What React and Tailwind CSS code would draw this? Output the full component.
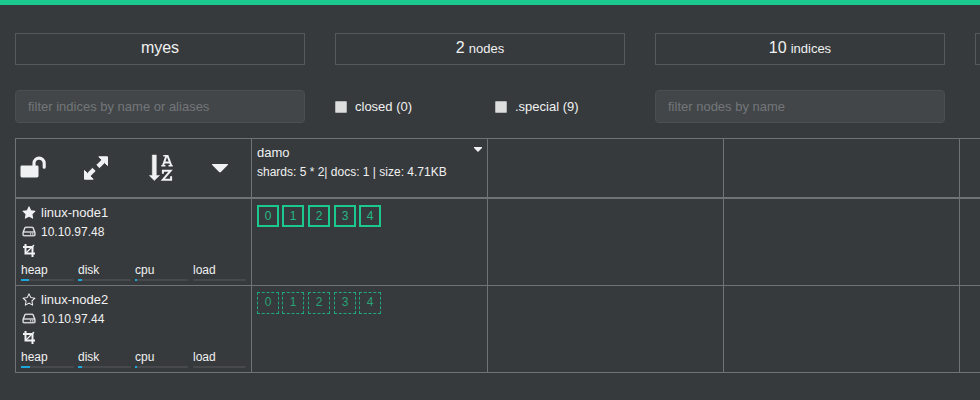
const STAR =
  'M1728 647q0 22-26 48l-363 354 86 500q1 7 1 20 0 21-10.5 35.5t-30.5 14.5q-19 0-40-12l-449-236-449 236q-22 12-40 12-21 0-31.5-14.5t-10.5-35.5q0-6 2-20l86-500-364-354q-25-27-25-48 0-37 56-46l502-73 225-455q19-41 49-41t49 41l225 455 502 73q56 9 56 46z';
const STAR_HOLE = 'M1201 1004l306-297-422-62-189-382-189 382-422 62 306 297-73 421 378-199 377 199z';
const HDD =
  'M1168 1216q0 33-23.5 56.5t-56.5 23.5-56.5-23.5-23.5-56.5 23.5-56.5 56.5-23.5 56.5 23.5 23.5 56.5zm256 0q0 33-23.5 56.5t-56.5 23.5-56.5-23.5-23.5-56.5 23.5-56.5 56.5-23.5 56.5 23.5 23.5 56.5zm112 160v-320q0-13-9.5-22.5t-22.5-9.5h-1216q-13 0-22.5 9.5t-9.5 22.5v320q0 13 9.5 22.5t22.5 9.5h1216q13 0 22.5-9.5t9.5-22.5zm-1230-480h1180l-157-482q-4-13-16-21.5t-26-8.5h-782q-14 0-26 8.5t-16 21.5zm1358 160v320q0 66-47 113t-113 47h-1216q-66 0-113-47t-47-113v-320q0-25 16-75l197-606q17-53 63-86t101-33h782q55 0 101 33t63 86l197 606q16 50 16 75z';

function StarIcon({ outline }) {
  return (
    <svg className="size-3.5 shrink-0" viewBox="0 0 1792 1792" fill="currentColor" fillRule="evenodd">
      <path d={outline ? STAR + STAR_HOLE : STAR} />
    </svg>
  );
}

function DiskIcon() {
  return (
    <svg className="h-[13px] w-3.5 shrink-0" viewBox="60 0 1672 1792" preserveAspectRatio="none" fill="currentColor" stroke="currentColor" strokeWidth="30">
      <path d={HDD} />
    </svg>
  );
}

function CropIcon() {
  return (
    <svg className="h-[13px] w-3.5 shrink-0" viewBox="0 0 14 13" fill="none" stroke="currentColor" strokeWidth="2">
      <path d="M3.500 0v9.500H13M1 3h9.500v10" />
      <path d="M4 9l8-8" strokeWidth="1.200" />
    </svg>
  );
}

function UnlockIcon() {
  return (
    <svg className="h-[22px] w-[27px]" viewBox="0 0 27 22" fill="currentColor">
      <rect x="0.500" y="9.500" width="18" height="12" rx="1.400" />
      <path d="M14 10.500V7.200a5.100 5.100 0 0 1 10.200 0v4" fill="none" stroke="currentColor" strokeWidth="3.100" strokeLinecap="round" />
    </svg>
  );
}

function ExpandIcon() {
  return (
    <svg className="h-6 w-6" viewBox="0 0 24 24" fill="currentColor" stroke="currentColor" strokeWidth="1" strokeLinejoin="round">
      <path d="M14.800 0.800h8.700v8.700l-2.900-2.900-5.100 5.100-2.700-2.700 5.100-5.100z" />
      <path d="M9.200 23.200H.5v-8.700l2.900 2.900 5.100-5.100 2.700 2.700-5.100 5.100z" />
    </svg>
  );
}

function SortIcon() {
  return (
    <svg className="h-7 w-6" viewBox="0 0 24 28" fill="currentColor" stroke="currentColor">
      <path d="M3.300 1h4v20.500h3.200L5.300 26.600 0.300 21.500h3z" strokeWidth="0.500" strokeLinejoin="round" />
      <g fill="none" strokeWidth="2">
        <path d="M14 11.500l3.400-9.500h1.200l3.600 9.500M15 8.600h6" />
        <path d="M12.300 11.700h4.200M19.500 11.700h4.200M14.300 1.800h4.200" strokeWidth="1.600" />
        <path d="M13.900 19.800v-3.100h7.700l-7.700 9h8.200v-3.400" />
      </g>
    </svg>
  );
}

function StatBox({ value, label }) {
  return (
    <div className="flex h-8 w-[290px] shrink-0 items-baseline justify-center border border-[#55595c] text-[16px] leading-[28px]">
      <span>{value}</span>
      {label && <span className="ml-1 text-[13px]">{label}</span>}
    </div>
  );
}

function Filter({ text }) {
  return (
    <input
      placeholder={text}
      className="h-[33px] w-[290px] shrink-0 rounded border border-[#4c4f52] bg-[#434648] px-3 text-[13px] placeholder:text-[#72767a]"
    />
  );
}

function Check({ label }) {
  return (
    <label className="flex w-40 items-center">
      <span className="size-3 rounded-[1px] border border-[#b4b4b4] bg-[#dedede]" />
      <span className="ml-2 text-[13px] leading-[18px]">{label}</span>
    </label>
  );
}

function Shard({ n, replica }) {
  return (
    <span
      className={
        replica
          ? 'flex size-[22px] justify-center border border-dashed border-[#20a77b] text-[12px] leading-[19px] text-[#28a177]'
          : 'flex size-[22px] justify-center border-2 border-[#1bc98e] text-[12px] leading-[18px] text-[#23b987]'
      }
    >
      {n}
    </span>
  );
}

function Shards({ replica }) {
  return (
    <div className="grid grid-cols-[25px_26px_26px_25px_22px]">
      {[0, 1, 2, 3, 4].map((n) => (
        <Shard key={n} n={n} replica={replica} />
      ))}
    </div>
  );
}

function Meter({ label, used }) {
  return (
    <div className="w-[53px]">
      <div className="h-[17px] text-[12px] leading-[17px]">{label}</div>
      <div className="h-0.5 rounded-[1px] bg-[#47494c]">
        <div className="h-0.5 bg-[#1ca8dd]" style={{ width: used }} />
      </div>
    </div>
  );
}

function NodeInfo({ name, ip, master, heap }) {
  return (
    <div className="pl-[5px]">
      <div className="ml-px flex h-[19px] items-center gap-[5px]">
        <StarIcon outline={!master} />
        <span className="text-[13px]">{name}</span>
      </div>
      <div className="ml-px flex h-[19px] items-center gap-[5px]">
        <DiskIcon />
        <span className="text-[12px]">{ip}</span>
      </div>
      <div className="ml-px flex h-[19px] items-center">
        <CropIcon />
      </div>
      <div className="mt-0.5 grid grid-cols-[57px_57px_58px_53px]">
        <Meter label="heap" used={heap} />
        <Meter label="disk" used={4} />
        <Meter label="cpu" used={2} />
        <Meter label="load" used={0} />
      </div>
    </div>
  );
}

function Cell({ className = '', children }) {
  return <div className={'w-[236px] shrink-0 border-l border-[#6f7376] ' + className}>{children}</div>;
}

const NODES = [
  { name: 'linux-node1', ip: '10.10.97.48', master: true, heap: 8 },
  { name: 'linux-node2', ip: '10.10.97.44', master: false, heap: 9 },
];

export default function App() {
  return (
    <div className="h-[400px] w-[980px] overflow-hidden border-t-[5px] border-[#1bc98e] bg-[#373a3c] pl-[15px] font-['Liberation_Sans',Arial,sans-serif] text-[#f0f1f2]">
      <div className="mt-7 flex gap-[30px]">
        <StatBox value="myes" />
        <StatBox value="2" label="nodes" />
        <StatBox value="10" label="indices" />
        <StatBox />
      </div>

      <div className="mt-[25px] flex">
        <Filter text="filter indices by name or aliases" />
        <div className="ml-[30px] flex w-80">
          <Check label="closed (0)" />
          <Check label=".special (9)" />
        </div>
        <Filter text="filter nodes by name" />
      </div>

      <div className="mt-[15px] border-t border-[#6f7376]">
        <div className="flex h-[60px] border-b-2 border-[#6f7376]">
          <Cell className="flex items-start pl-1">
            <div className="mt-[17px] w-16"><UnlockIcon /></div>
            <div className="mt-[17px] w-[65px]"><ExpandIcon /></div>
            <div className="mt-[15px] w-[62px]"><SortIcon /></div>
            <svg className="mt-6 h-[10px] w-[18px]" viewBox="0 0 18 10" fill="currentColor">
              <path d="M1.600 1h14.800q1.200 0 .4.900L9.900 9q-.9.800-1.800 0L1.200 1.900Q.4 1 1.600 1z" />
            </svg>
          </Cell>
          <Cell className="flex justify-between pt-1 pl-[5px]">
            <div className="text-[12px] leading-[19px] whitespace-nowrap">
              <div className="text-[13px]">damo</div>
              <div className="mt-px">shards: 5 * 2| docs: 1 | size: 4.71KB</div>
            </div>
            <svg className="mt-1 mr-[5px] h-[5px] w-2" viewBox="0 0 8 5" fill="currentColor">
              <path d="M0 0h8v1L4 5 0 1z" />
            </svg>
          </Cell>
          <Cell />
          <Cell />
          <Cell />
        </div>
        {NODES.map((node) => (
          <div key={node.name} className="flex h-[87px] border-b border-[#6f7376]">
            <Cell className="pt-1">
              <NodeInfo {...node} />
            </Cell>
            <Cell className="pt-1.5 pl-[5px]">
              <Shards replica={!node.master} />
            </Cell>
            <Cell />
            <Cell />
            <Cell />
          </div>
        ))}
      </div>
    </div>
  );
}
